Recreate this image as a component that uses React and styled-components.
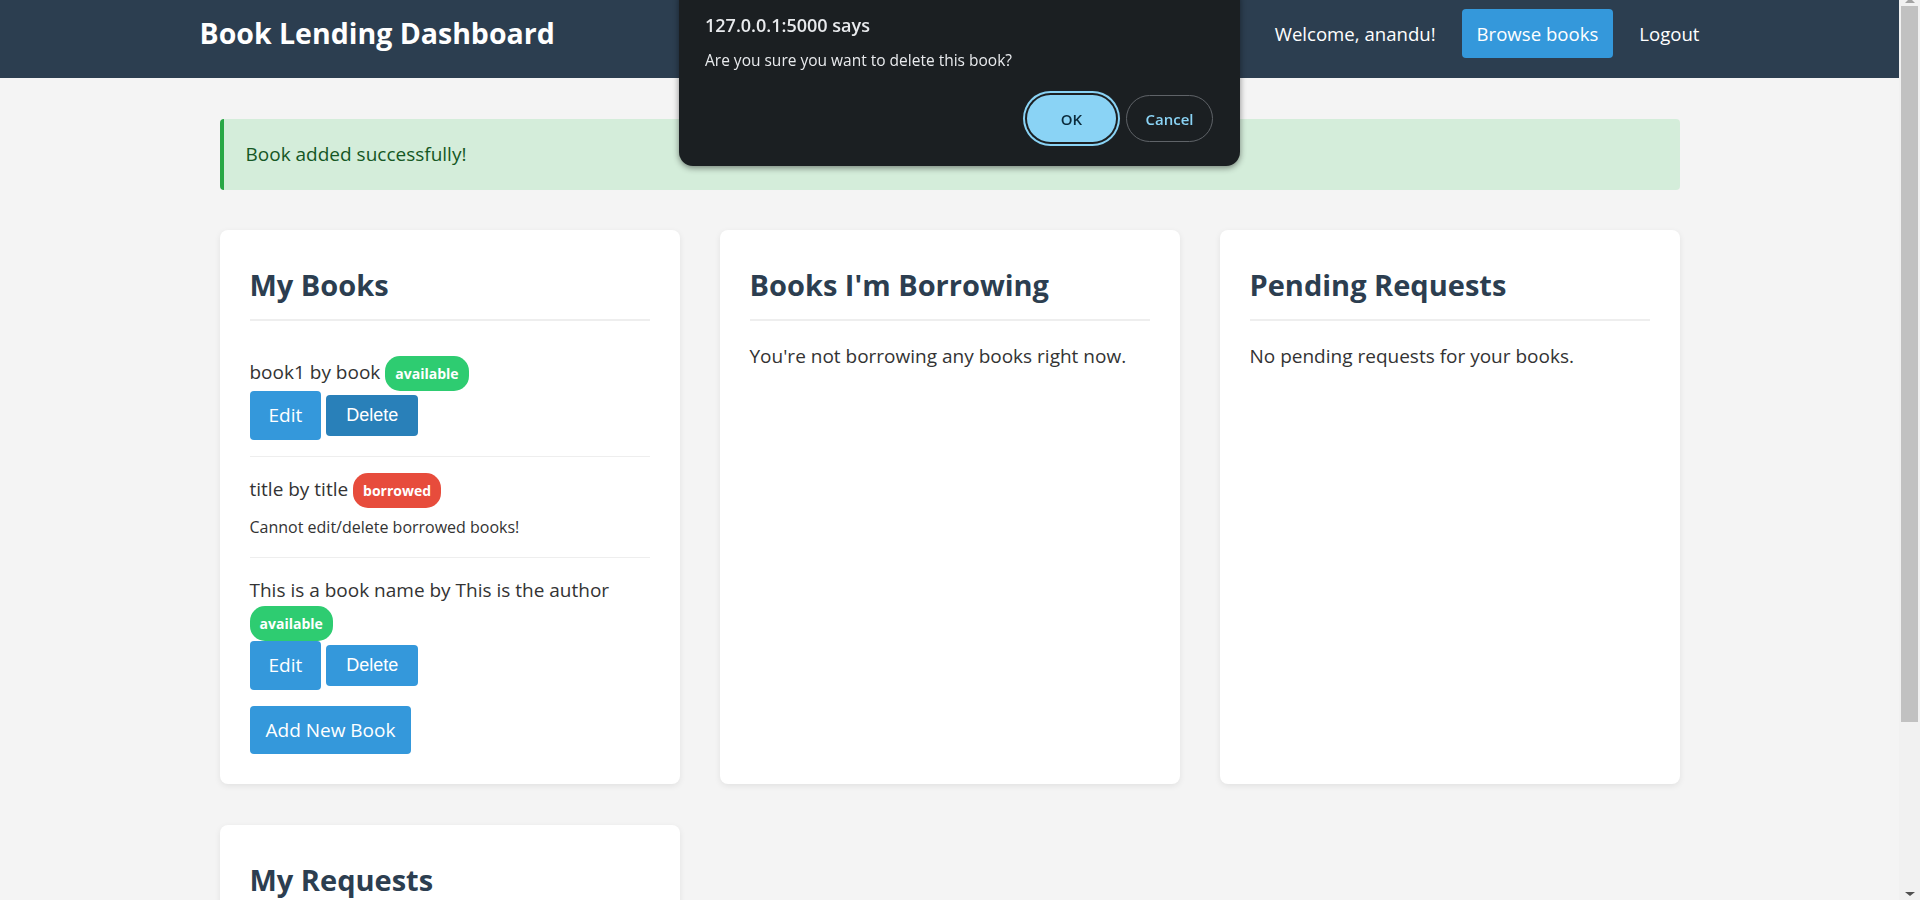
import React from 'react';
import styled, { createGlobalStyle } from 'styled-components';

const GlobalStyle = createGlobalStyle`
  body {
    margin: 0 21px 0 0;
    background: #f4f4f4;
    color: #333;
    font-family: "Open Sans", "Noto Sans", sans-serif;
    font-size: 19px;
    line-height: 1.6;
  }

  * {
    box-sizing: border-box;
  }
`

const myBooks = [
  { id: 1, title: 'book1', author: 'book', status: 'available', hovered: true },
  { id: 2, title: 'title', author: 'title', status: 'borrowed' },
  { id: 3, title: 'This is a book name', author: 'This is the author', status: 'available' },
]

export default function App() {
  return (
    <>
      <GlobalStyle />

      <Header>
        <HeaderInner>
          <Brand>Book Lending Dashboard</Brand>
          <Nav>
            <span>Welcome, anandu!</span>
            <NavButton href="#">Browse books</NavButton>
            <NavLink href="#">Logout</NavLink>
          </Nav>
        </HeaderInner>
      </Header>

      <Main>
        <Alert>Book added successfully!</Alert>

        <Grid>
          <Card>
            <CardTitle>My Books</CardTitle>
            {myBooks.map(book => (
              <BookItem key={book.id}>
                <BookLine>
                  {book.title} by {book.author} <Badge status={book.status}>{book.status}</Badge>
                </BookLine>
                {book.status === 'borrowed' ? (
                  <Note>Cannot edit/delete borrowed books!</Note>
                ) : (
                  <Actions>
                    <LinkButton href="#">Edit</LinkButton>
                    <DeleteButton hovered={book.hovered}>Delete</DeleteButton>
                  </Actions>
                )}
              </BookItem>
            ))}
            <AddButton href="#">Add New Book</AddButton>
          </Card>

          <Card>
            <CardTitle>Books I'm Borrowing</CardTitle>
            <Empty>You're not borrowing any books right now.</Empty>
          </Card>

          <Card>
            <CardTitle>Pending Requests</CardTitle>
            <Empty>No pending requests for your books.</Empty>
          </Card>

          <Card>
            <CardTitle>My Requests</CardTitle>
            <Empty>You haven't requested any books yet.</Empty>
          </Card>
        </Grid>
      </Main>

      <Dialog>
        <DialogTitle>127.0.0.1:5000 says</DialogTitle>
        <DialogText>Are you sure you want to delete this book?</DialogText>
        <DialogButtons>
          <DialogButton primary>OK</DialogButton>
          <DialogButton>Cancel</DialogButton>
        </DialogButtons>
      </Dialog>

      <Scrollbar>
        <ArrowUp />
        <Thumb />
        <ArrowDown />
      </Scrollbar>
    </>
  )
}

const Header = styled.header`
  height: 78px;
  padding-bottom: 11px;
  background: #2c3e50;
  color: #ffffff;
`

const HeaderInner = styled.div`
  display: flex;
  justify-content: space-between;
  align-items: center;

  max-width: 1500px;
  height: 100%;
  margin: 0 auto;
`

const Brand = styled.h1`
  margin: 0;
  font-size: 28.5px;
  font-weight: 700;
`

const Nav = styled.nav`
  display: flex;
  align-items: center;
  gap: 26px;

  font-size: 18.6px;
`

const NavButton = styled.a`
  display: inline-flex;
  align-items: center;

  height: 49px;
  padding: 0 15px;
  border-radius: 4px;

  background: #3498db;
  color: #ffffff;
  text-decoration: none;
`

const NavLink = styled.a`
  color: #ffffff;
  text-decoration: none;
`

const Main = styled.main`
  max-width: 1460px;
  margin: 41px auto 0;
  padding-bottom: 40px;
`

const Alert = styled.div`
  display: flex;
  align-items: center;

  height: 71px;
  padding: 0 22px;
  border-left: 4px solid #28a745;
  border-radius: 4px;

  background: #d4edda;
  color: #155724;
`

const Grid = styled.div`
  display: grid;
  grid-template-columns: repeat(3, 1fr);
  gap: 41px 40px;

  margin-top: 40px;
`

const Card = styled.section`
  padding: 30px;
  border-radius: 8px;

  background: #ffffff;
  box-shadow: 0 2px 6px rgba(0, 0, 0, 0.08);
`

const CardTitle = styled.h2`
  margin: 0 0 20px;
  padding-bottom: 9px;
  border-bottom: 2px solid #eeeeee;

  color: #2c3e50;
  font-size: 29px;
  font-weight: 700;
  line-height: 50px;
`

const BookItem = styled.div`
  padding: 16px 0;
  border-bottom: 1px solid #eeeeee;

  &:first-of-type {
    padding-top: 15px;
  }

  &:last-of-type {
    border-bottom: none;
    padding-bottom: 0;
  }
`

const BookLine = styled.div`
  line-height: 32px;
`

const Badge = styled.span`
  display: inline-block;

  padding: 7px 10px;
  border-radius: 15px;

  background: ${props => props.status === 'borrowed' ? '#e74c3c' : '#2ecc71'};
  color: #ffffff;
  font-size: 14px;
  font-weight: 700;
  line-height: 21px;
`

const Note = styled.p`
  margin: 6px 0 0;
  font-size: 16px;
  line-height: 27px;
`

const Actions = styled.div`
  display: flex;
  align-items: center;
  gap: 5px;
`

const LinkButton = styled.a`
  display: inline-block;

  padding: 12px 19px;
  border-radius: 4px;

  background: #3498db;
  color: #ffffff;
  line-height: 25px;
  text-decoration: none;
`

const DeleteButton = styled.button`
  padding: 10px 20px;
  border: none;
  border-radius: 4px;

  background: ${props => props.hovered ? '#2980b9' : '#3498db'};
  color: #ffffff;
  font-family: "Liberation Sans", Arial, sans-serif;
  font-size: 18px;
  line-height: 21px;
`

const AddButton = styled(LinkButton)`
  margin-top: 16px;
  padding: 12px 16px 11px;
`

const Empty = styled.p`
  margin: 0;
`

const Dialog = styled.div`
  position: fixed;
  top: -14px;
  left: 679px;

  width: 561px;
  padding: 27px 27px 24px 26px;
  border-radius: 14px;

  background: #1b1f22;
  color: #e8eaed;
  box-shadow: 0 2px 6px rgba(0, 0, 0, 0.45);
`

const DialogTitle = styled.div`
  font-size: 18px;
  font-weight: 600;
  line-height: 24px;
`

const DialogText = styled.div`
  margin-top: 13px;
  font-size: 15.5px;
  line-height: 20px;
`

const DialogButtons = styled.div`
  display: flex;
  justify-content: flex-end;
  gap: 10px;

  margin-top: 25px;
`

const DialogButton = styled.button`
  width: ${props => props.primary ? '89px' : '87px'};
  height: 47px;
  border: ${props => props.primary ? 'none' : '1px solid #5f6368'};
  border-radius: 24px;

  background: ${props => props.primary ? '#8ad3f5' : 'transparent'};
  box-shadow: ${props => props.primary ? '0 0 0 2px #1b1f22, 0 0 0 4px #8ad3f5' : 'none'};
  color: ${props => props.primary ? '#0b2a3b' : '#8ad3f5'};
  font-family: "Open Sans", "Noto Sans", sans-serif;
  font-size: 15px;
  font-weight: 600;
`

const Scrollbar = styled.div`
  position: fixed;
  top: 0;
  right: 0;
  bottom: 0;

  display: flex;
  flex-direction: column;
  align-items: center;

  width: 21px;
  background: #f1f1f1;
`

const ArrowUp = styled.div`
  width: 0;
  height: 0;
  margin-top: -2px;
  border-left: 5px solid transparent;
  border-right: 5px solid transparent;
  border-bottom: 5px solid #a3a3a3;
`

const Thumb = styled.div`
  width: 17px;
  height: 716px;
  margin-top: 3px;
  background: #c1c1c1;
`

const ArrowDown = styled.div`
  width: 0;
  height: 0;
  margin-top: auto;
  margin-bottom: 4px;
  border-left: 5px solid transparent;
  border-right: 5px solid transparent;
  border-top: 4px solid #505050;
`
